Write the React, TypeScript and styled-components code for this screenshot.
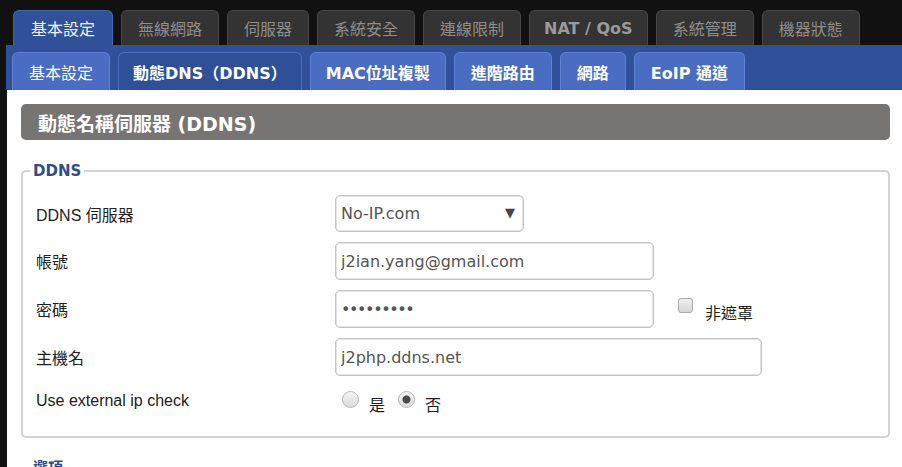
import React from "react";
import styled, { createGlobalStyle, css } from "styled-components";

const GlobalStyle = createGlobalStyle`
  html, body {
    margin: 0;
    padding: 0;
    background: #111111;
    overflow: hidden;
  }
  * { box-sizing: border-box; }
`;

const CJK = `"Noto Sans CJK TC", sans-serif`;

const Page = styled.div`
  padding: 10px 0 0 6px;
  width: 902px;
  height: 467px;
  overflow: hidden;
`;

const TopTabs = styled.nav`
  display: flex;
  gap: 8px;
  padding-left: 7px;
  align-items: flex-end;
  height: 35px;
`;

const TopTab = styled.div<{ $active?: boolean; $latin?: boolean }>`
  height: 35px;
  padding: 0 16px;
  display: flex;
  align-items: center;
  border: 1px solid #474747;
  border-bottom: none;
  border-radius: 6px 6px 0 0;
  background: #333333;
  color: #8e8e8e;
  font-family: ${CJK};
  font-size: 16px;
  white-space: nowrap;
  ${(p) =>
    p.$latin &&
    css`
      font-family: "DejaVu Sans", ${CJK};
      font-weight: bold;
      color: #9a9a9a;
      padding: 0 14px;
    `}
  ${(p) =>
    p.$active &&
    css`
      background: #30519a;
      border-color: #4566b0;
      color: #f2f2f2;
      padding: 0 17px;
    `}
`;

const SubBar = styled.div`
  background: #30519a;
  height: 45px;
  padding: 7px 0 0 6px;
  display: flex;
  gap: 8px;
  align-items: flex-end;
`;

const SubTab = styled.div<{ $active?: boolean; $bold?: boolean; $pad?: number }>`
  height: 38px;
  padding: 0 ${(p) => p.$pad ?? 16}px;
  display: flex;
  align-items: center;
  border: 1px solid #5f82d2;
  border-bottom: none;
  border-radius: 6px 6px 0 0;
  background: #4a6cc2;
  color: #ffffff;
  font-family: "DejaVu Sans", ${CJK};
  font-size: 16px;
  font-weight: ${(p) => (p.$bold ? "bold" : "normal")};
  white-space: nowrap;
  ${(p) =>
    p.$active &&
    css`
      background: #2f5099;
      border-color: #4d70c0;
    `}
`;

const Content = styled.main`
  margin-left: 1px;
  background: #ffffff;
  padding: 14px 12px 0 14px;
  height: 400px;
`;

const SectionHeader = styled.h2`
  margin: 0;
  height: 36px;
  border-radius: 5px;
  background: #777573;
  color: #ffffff;
  font-family: "DejaVu Sans", ${CJK};
  font-size: 19px;
  font-weight: bold;
  display: flex;
  align-items: center;
  padding-left: 17px;
`;

const Fieldset = styled.fieldset<{ $gap?: number }>`
  margin: ${(p) => p.$gap ?? 22}px 0 0;
  padding: 15px 13px 20px 13px;
  border: 2px solid #d3d3d3;
  border-radius: 5px;
  min-width: 0;
`;

const Legend = styled.legend`
  margin-left: -6px;
  padding: 0 3px;
  font-family: "DejaVu Sans", ${CJK};
  font-size: 15px;
  line-height: 18px;
  font-weight: bold;
  color: #2f4e8f;
`;

const FormGrid = styled.div`
  display: grid;
  grid-template-columns: 299px 1fr;
  row-gap: 10px;
  align-items: center;
`;

const Label = styled.label`
  font-family: "Liberation Sans", ${CJK};
  font-size: 16px;
  color: #222222;
`;

const Control = styled.div<{ $h?: number }>`
  display: flex;
  align-items: center;
  min-height: ${(p) => p.$h ?? 38}px;
`;

const fieldCss = css`
  height: 38px;
  border: 1px solid #c4c4c4;
  box-shadow: inset 0 0 0 1px #e4e4e4;
  border-radius: 5px;
  background: #ffffff;
  padding: 0 5px;
  font-family: "DejaVu Sans", ${CJK};
  font-size: 16px;
  color: #555555;
  outline: none;
`;

const TextInput = styled.input<{ $w: number }>`
  ${fieldCss};
  width: ${(p) => p.$w}px;
`;

const PasswordInput = styled(TextInput)`
  letter-spacing: -1.4px;
`;

const SelectWrap = styled.div`
  position: relative;
  width: 189px;
`;

const Select = styled.select`
  ${fieldCss};
  height: 37px;
  width: 189px;
  appearance: none;
  -webkit-appearance: none;
`;

const Arrow = styled.span`
  position: absolute;
  right: 9px;
  top: 10px;
  font-size: 13px;
  color: #444444;
  pointer-events: none;
  font-family: "DejaVu Sans", sans-serif;
`;

const CheckGroup = styled.label`
  display: flex;
  align-items: center;
  margin-left: 24px;
`;

const Checkbox = styled.input`
  appearance: none;
  -webkit-appearance: none;
  width: 15px;
  height: 15px;
  margin: -7px 0 0 0;
  border: 1px solid #aaaaaa;
  border-radius: 3px;
  background: linear-gradient(#f0f0f0, #d6d6d6);
`;

const OptionText = styled.span<{ $gap?: number }>`
  font-family: "DejaVu Sans", ${CJK};
  font-size: 16px;
  color: #222222;
  margin-left: ${(p) => p.$gap ?? 10}px;
  margin-top: 6px;
`;

const Radio = styled.input<{ $first?: boolean }>`
  appearance: none;
  -webkit-appearance: none;
  width: 17px;
  height: 17px;
  margin: -4px 0 0 ${(p) => (p.$first ? 7 : 13)}px;
  border: 1px solid #b8b8b8;
  border-radius: 50%;
  background: linear-gradient(#f4f4f4, #dadada);
  &:checked {
    background: radial-gradient(circle, #4a4a4a 0, #4a4a4a 3.5px, transparent 4.5px),
      linear-gradient(#f4f4f4, #dadada);
  }
`;

const topTabs = [
  { t: "基本設定", active: true },
  { t: "無線網路" },
  { t: "伺服器" },
  { t: "系統安全" },
  { t: "連線限制" },
  { t: "NAT / QoS", latin: true },
  { t: "系統管理" },
  { t: "機器狀態" },
];

const subTabs = [
  { t: "基本設定" },
  { t: "動態DNS（DDNS）", active: true, bold: true, pad: 14 },
  { t: "MAC位址複製", bold: true, pad: 15 },
  { t: "進階路由", bold: true },
  { t: "網路", bold: true },
  { t: "EoIP 通道", bold: true },
];

export default function App() {
  return (
    <>
      <GlobalStyle />
      <Page>
        <TopTabs>
          {topTabs.map((x) => (
            <TopTab key={x.t} $active={x.active} $latin={x.latin}>
              {x.t}
            </TopTab>
          ))}
        </TopTabs>
        <SubBar>
          {subTabs.map((x) => (
            <SubTab key={x.t} $active={x.active} $bold={x.bold} $pad={x.pad}>
              {x.t}
            </SubTab>
          ))}
        </SubBar>
        <Content>
          <SectionHeader>動態名稱伺服器 (DDNS)</SectionHeader>
          <Fieldset>
            <Legend>DDNS</Legend>
            <FormGrid>
              <Label>DDNS 伺服器</Label>
              <Control $h={36}>
                <SelectWrap>
                  <Select defaultValue="noip">
                    <option value="noip">No-IP.com</option>
                  </Select>
                  <Arrow>▼</Arrow>
                </SelectWrap>
              </Control>

              <Label>帳號</Label>
              <Control>
                <TextInput $w={319} defaultValue="j2ian.yang@gmail.com" />
              </Control>

              <Label>密碼</Label>
              <Control>
                <PasswordInput $w={319} type="password" defaultValue="123456789" />
                <CheckGroup>
                  <Checkbox type="checkbox" />
                  <OptionText $gap={12}>非遮罩</OptionText>
                </CheckGroup>
              </Control>

              <Label>主機名</Label>
              <Control>
                <TextInput $w={427} defaultValue="j2php.ddns.net" />
              </Control>

              <Label>Use external ip check</Label>
              <Control $h={26}>
                <Radio type="radio" name="ext" $first />
                <OptionText>是</OptionText>
                <Radio type="radio" name="ext" defaultChecked />
                <OptionText>否</OptionText>
              </Control>
            </FormGrid>
          </Fieldset>
          <Fieldset $gap={21}>
            <Legend>選項</Legend>
            <FormGrid>
              <Label>選項</Label>
              <Control />
            </FormGrid>
          </Fieldset>
        </Content>
      </Page>
    </>
  );
}
